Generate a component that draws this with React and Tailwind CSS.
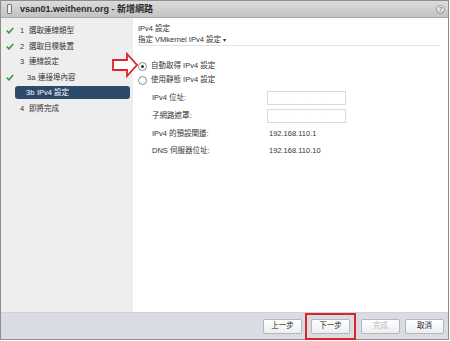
import React from "react";

const steps = [
  { num: "1", label: "選取連線類型", done: true },
  { num: "2", label: "選取目標裝置", done: true },
  { num: "3", label: "連線設定", done: false },
  { num: "3a", label: "連接埠內容", done: true, sub: true },
  { num: "3b", label: "IPv4 設定", done: false, sub: true, active: true },
  { num: "4", label: "即將完成", done: false },
];

const Check = () => (
  <svg width="8" height="7" viewBox="0 0 8 7" className="absolute left-[5px] top-[4px]">
    <path d="M0.8 3.6 L3 5.8 L7.2 1" fill="none" stroke="#3c9a3c" strokeWidth="1.6" />
  </svg>
);

const Radio = ({ checked }) => (
  <span className="w-[9px] h-[9px] rounded-full border border-[#8c8c8c] bg-white flex items-center justify-center shrink-0">
    {checked && <span className="w-[3px] h-[3px] rounded-full bg-[#333]" />}
  </span>
);

const IpInput = () => (
  <div className="w-[79px] h-[14px] border border-[#d9d9d9] bg-white flex items-center justify-around px-[10px] text-[6px] text-[#bbb] leading-none">
    <span>.</span>
    <span>.</span>
    <span>.</span>
  </div>
);

const Btn = ({ children, disabled }) => (
  <button
    className={
      "w-[39px] h-[15px] rounded-[2px] border border-[#b4b6ba] bg-gradient-to-b from-white to-[#eceef1] text-[7.5px] leading-none flex items-center justify-center " +
      (disabled ? "text-[#b9b9b9]" : "text-[#222]")
    }
  >
    {children}
  </button>
);

export default function App() {
  return (
    <div
      className="relative w-[450px] h-[341px] bg-white overflow-hidden"
      style={{ fontFamily: '"Liberation Sans", "Noto Sans CJK TC", sans-serif' }}
    >
      <div className="w-[449px] h-[340px] border border-[#8e8e8e] flex flex-col">
        {/* Title bar */}
        <div className="h-[17px] shrink-0 bg-gradient-to-b from-[#dcdcdc] to-[#c2c2c2] border-b border-[#a8a8a8] flex items-center pl-[6px] pr-[3px]">
          <div className="w-[5px] h-[10px] border border-[#777] rounded-[1px] bg-[#eee] mr-[8px]" />
          <span className="text-[9px] font-bold text-[#2a2a2a] leading-none">vsan01.weithenn.org - 新增網路</span>
          <span className="ml-auto w-[9px] h-[9px] rounded-full border border-[#999] bg-gradient-to-b from-white to-[#ccc] text-[6px] font-bold text-[#777] flex items-center justify-center leading-none">
            ?
          </span>
        </div>

        {/* Body */}
        <div className="flex-1 flex min-h-0">
          <div className="w-[132px] shrink-0 bg-[#efeeee] pt-[5px]">
            {steps.map((s) => (
              <div key={s.num} className="relative h-[15.5px] flex items-center">
                {s.done && <Check />}
                <div
                  className={
                    "flex items-center h-[13px] text-[7.5px] leading-none " +
                    (s.active
                      ? "ml-[14px] w-[115px] rounded-[3px] bg-[#2c4a6b] text-white pl-[11px]"
                      : s.sub
                      ? "pl-[26px] text-[#333]"
                      : "pl-[19px] text-[#333]")
                  }
                >
                  <span className={s.sub ? "w-[11px]" : "w-[9px]"}>{s.num}</span>
                  <span>{s.label}</span>
                </div>
              </div>
            ))}
          </div>

          <div className="flex-1 flex flex-col pl-[5px] pr-[8px]">
            <div className="h-[28px] pt-[7px] border-b border-[#e3e3e3] text-[7.5px] text-[#333] leading-none flex flex-col gap-[3px]">
              <span>IPv4 設定</span>
              <span>
                指定 VMkernel IPv4 設定 <span className="text-[6px]">▾</span>
              </span>
            </div>

            <div className="pt-[13px] flex flex-col text-[7.5px] text-[#333] leading-none">
              <div className="h-[14px] flex items-center gap-[4px]">
                <Radio checked />
                <span>自動取得 IPv4 設定</span>
              </div>
              <div className="h-[14px] flex items-center gap-[4px]">
                <Radio />
                <span>使用靜態 IPv4 設定</span>
              </div>
              <div className="pl-[14px] pt-[4px] flex flex-col gap-[4px]">
                <div className="flex items-center h-[14px]">
                  <span className="w-[115px]">IPv4 位址:</span>
                  <IpInput />
                </div>
                <div className="flex items-center h-[14px]">
                  <span className="w-[115px]">子網路遮罩:</span>
                  <IpInput />
                </div>
                <div className="flex items-center h-[13px]">
                  <span className="w-[117px]">IPv4 的預設閘道:</span>
                  <span>192.168.110.1</span>
                </div>
                <div className="flex items-center h-[13px]">
                  <span className="w-[117px]">DNS 伺服器位址:</span>
                  <span>192.168.110.10</span>
                </div>
              </div>
            </div>
          </div>
        </div>

        {/* Footer */}
        <div className="h-[27px] shrink-0 bg-[#d9dce3] border-t border-[#cfd2d8] flex items-center justify-end pr-[4px] gap-[5px]">
          <Btn>上一步</Btn>
          <div className="border-2 border-[#d8262c] px-[4px] py-[4px] -ml-[2px]">
            <Btn>下一步</Btn>
          </div>
          <Btn disabled>完成</Btn>
          <Btn>取消</Btn>
        </div>
      </div>

      {/* Annotation arrow */}
      <svg className="absolute left-[111px] top-[52px]" width="28" height="26" viewBox="0 0 28 26">
        <path
          d="M2 8 L16 8 L16 2 L26 13 L16 24 L16 18 L2 18 Z"
          fill="white"
          stroke="#d8262c"
          strokeWidth="1.8"
          strokeLinejoin="miter"
        />
      </svg>
    </div>
  );
}
